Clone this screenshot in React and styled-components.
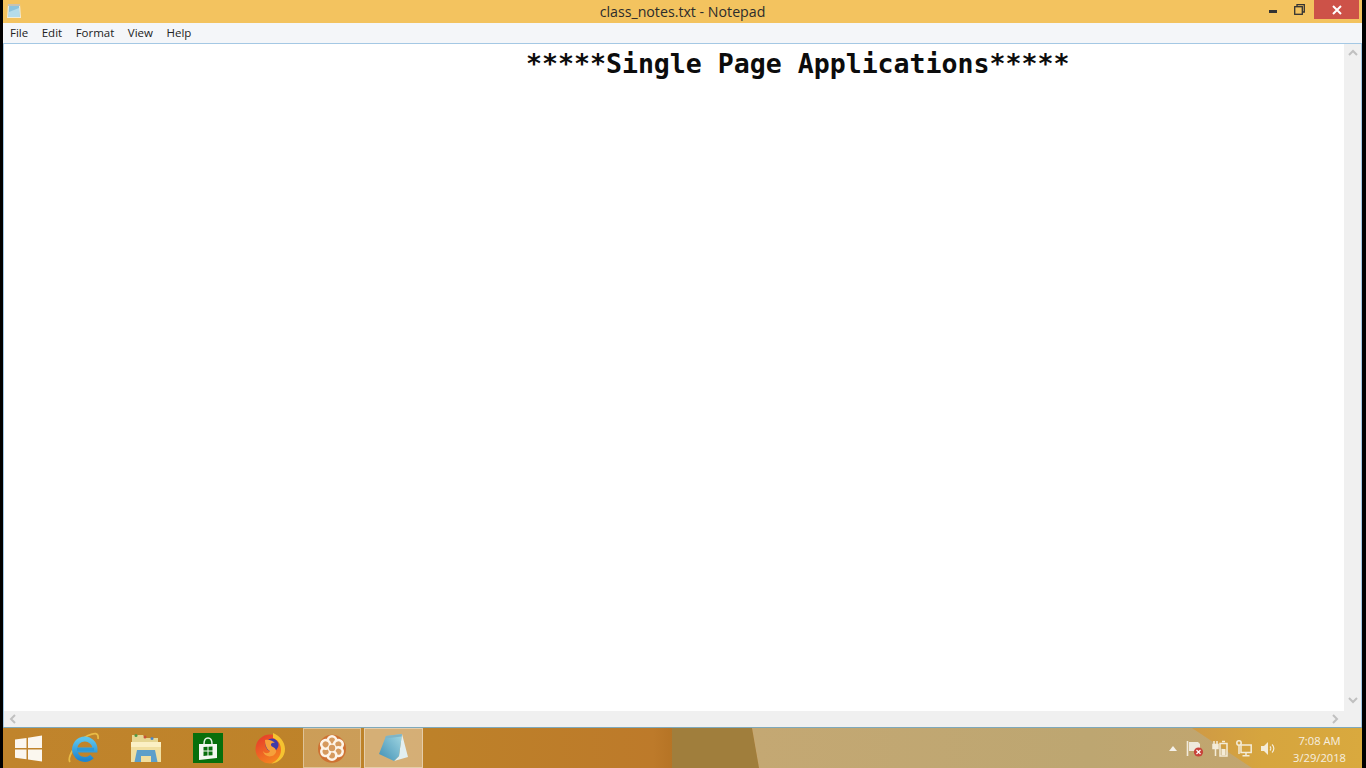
import styled, { createGlobalStyle } from "styled-components";

const GlobalStyle = createGlobalStyle`
  html, body {
    margin: 0;
    padding: 0;
    height: 768px;
    overflow: hidden;
    background: #000;
  }
`;

const menuItems = ["File", "Edit", "Format", "View", "Help"];

function SmallNotepadIcon() {
  return (
    <svg width="16" height="16" viewBox="0 0 16 16">
      <path d="M2 1 H14 L15 15 H1 Z" fill="#f1ecd9" />
      <path d="M3 3 H13 L13.6 14 H2.4 Z" fill="#8cc3dc" />
      <path d="M3 9 L13 5 L13.6 14 H2.4 Z" fill="#b5dcea" />
      <path d="M3 1 V3 M5 1 V3 M7 1 V3 M9 1 V3 M11 1 V3 M13 1 V3" stroke="#7d7566" strokeWidth="0.7" />
    </svg>
  );
}

function NotepadIcon() {
  return (
    <svg width="32" height="30" viewBox="0 0 32 30">
      <defs>
        <linearGradient id="noteBlue" x1="0" y1="1" x2="1" y2="0">
          <stop offset="0" stopColor="#3f8fb4" />
          <stop offset="1" stopColor="#a3d8e3" />
        </linearGradient>
      </defs>
      <path d="M24 1 L30 24 L16 28 L21 23 Z" fill="#e2eff1" />
      <path d="M1 21 L8 3 L24 1 L21 23 L16 28 Z" fill="url(#noteBlue)" />
      <path d="M8 3 L24 1 L23.6 3.6 L7 5.6 Z" fill="#7fb4c6" />
    </svg>
  );
}

function WindowsLogo() {
  return (
    <svg width="27" height="27" viewBox="0 0 27 27" fill="#fbf7ef">
      <path d="M0 4.5 L11.5 3 V13 H0 Z" />
      <path d="M13 2.7 L27 .5 V13 H13 Z" />
      <path d="M0 14.5 H11.5 V24.3 L0 22.7 Z" />
      <path d="M13 14.5 H27 V26.6 L13 24.6 Z" />
    </svg>
  );
}

function IeIcon() {
  return (
    <svg width="32" height="32" viewBox="0 0 32 32" fill="none">
      <defs>
        <linearGradient id="ieBlue" x1="0" y1="0" x2="0" y2="1">
          <stop offset="0" stopColor="#5cc4ec" />
          <stop offset="1" stopColor="#1f86cf" />
        </linearGradient>
      </defs>
      <path d="M2 30 C-1 26 8 9 20 3.5 C26 1 31 0 30 7" stroke="#e8bb45" strokeWidth="1.8" />
      <path
        d="M8.5 18 H27 A10.2 10.2 0 1 0 24 24.5"
        stroke="url(#ieBlue)"
        strokeWidth="5"
      />
      <path d="M9 17.5 H26" stroke="#2c9ada" strokeWidth="3.4" />
    </svg>
  );
}

function FolderIcon() {
  return (
    <svg width="32" height="30" viewBox="0 0 32 30">
      <path d="M2 2 H13 L15 5 H28 V12 H2 Z" fill="#e6d693" />
      <circle cx="6" cy="2.6" r="1.5" fill="#4e9a46" />
      <circle cx="15" cy="4" r="1.5" fill="#c8503a" />
      <circle cx="22" cy="5.5" r="1.5" fill="#4a86c6" />
      <path d="M1 9 H31 V29 H1 Z" fill="#f1dfa0" />
      <path d="M1 9 H31 V14 H1 Z" fill="#fbf0c4" />
      <path d="M7 17 H25 L27.5 29 H21 V23 H11 V29 H4.5 Z" fill="#5d9fca" />
    </svg>
  );
}

function StoreIcon() {
  return (
    <svg width="30" height="30" viewBox="0 0 30 30">
      <rect width="30" height="30" fill="#086f0c" />
      <path d="M11 11 C11 3 19 3 19 11" stroke="#e8f3e8" strokeWidth="1.5" fill="none" />
      <path d="M6 11 L24 11 V25 L6 27 Z" fill="#f4f8f1" />
      <path d="M10.5 14 L14.5 13.8 V17.6 H10.5 Z M15.5 13.8 L19.5 13.6 V17.6 H15.5 Z M10.5 18.6 H14.5 V22.6 L10.5 23 Z M15.5 18.6 H19.5 V22.2 L15.5 22.5 Z" fill="#086f0c" />
    </svg>
  );
}

function FirefoxIcon() {
  return (
    <svg width="32" height="32" viewBox="0 0 32 32">
      <defs>
        <linearGradient id="foxBody" x1="0" y1="0" x2="0.6" y2="1">
          <stop offset="0" stopColor="#e5352b" />
          <stop offset="1" stopColor="#f5861f" />
        </linearGradient>
      </defs>
      <circle cx="16" cy="17" r="14.5" fill="url(#foxBody)" />
      <path d="M19 1 C26 4 31 10 31 17 C31 25 25 31 17 31.5 C23 29 27 24 27 18 C27 12 24 8 19 6 Z" fill="#f5c330" />
      <circle cx="18" cy="13" r="6.5" fill="#3f3aa8" />
      <path d="M11 8 C15 7 19 9 21 11 C17 10 16 13 18 14.5 C22 16 24 20 20 23 C16 26 10 24 9 19 C11 22 15 22 16 19 C13 18 11 13 11 8 Z" fill="#f6a03a" />
    </svg>
  );
}

function FlowerIcon() {
  const petals = [0, 60, 120, 180, 240, 300];
  return (
    <svg width="30" height="30" viewBox="0 0 30 30">
      <circle cx="15" cy="15.8" r="14" fill="#cf6a2c" opacity="0.85" />
      {petals.map((a) => (
        <circle
          key={a}
          cx="15"
          cy="7.6"
          r="4.3"
          fill="#d69a5e"
          stroke="#fdf4e8"
          strokeWidth="2.6"
          transform={`rotate(${a} 15 15)`}
        />
      ))}
      <circle cx="15" cy="15" r="3.2" fill="#d69a5e" />
    </svg>
  );
}

function FlagIcon() {
  return (
    <svg width="18" height="17" viewBox="0 0 18 17">
      <path d="M1.5 1 V16" stroke="#f1eadb" strokeWidth="1.6" />
      <path d="M3 2 H12 L14 4 V11 H3 Z" fill="#efe9dc" />
      <circle cx="12.5" cy="12" r="4.6" fill="#c8423a" />
      <path d="M10.5 10 L14.5 14 M14.5 10 L10.5 14" stroke="#fff" strokeWidth="1.2" />
    </svg>
  );
}

function PowerIcon() {
  return (
    <svg width="16" height="17" viewBox="0 0 16 17" fill="none" stroke="#f4ecd8" strokeWidth="1.5">
      <rect x="8" y="3.5" width="7" height="12.5" />
      <rect x="9.5" y="9" width="4" height="6" fill="#f4ecd8" stroke="none" />
      <path d="M10 1.5 H13" />
      <path d="M2 1 V4 M5 1 V4" />
      <rect x="1" y="4.5" width="5" height="4" fill="#f4ecd8" />
      <path d="M3.5 8 V16" />
    </svg>
  );
}

function NetworkIcon() {
  return (
    <svg width="16" height="17" viewBox="0 0 16 17" fill="none" stroke="#f4ecd8" strokeWidth="1.5">
      <rect x="5" y="5" width="10.2" height="7.5" />
      <path d="M10 12.5 V15.5 M6.5 15.8 H13.5" />
      <circle cx="3" cy="3" r="2.2" />
      <path d="M3 5.5 V14" />
    </svg>
  );
}

function SpeakerIcon() {
  return (
    <svg width="16" height="17" viewBox="0 0 16 17" fill="none" stroke="#f4ecd8" strokeWidth="1.2">
      <path d="M1 6 H4 L8 2 V15 L4 11 H1 Z" fill="#f4ecd8" stroke="none" />
      <path d="M10 6.5 C11 7.5 11 9.5 10 10.5" />
      <path d="M12 4.5 C14.4 6.5 14.4 10.5 12 12.5" />
    </svg>
  );
}

export default function App() {
  return (
    <>
      <GlobalStyle />
      <Screen>
        <Window>
          <TitleBar>
            <TitleIcon>
              <SmallNotepadIcon />
            </TitleIcon>
            <TitleText>class_notes.txt - Notepad</TitleText>
            <WindowButtons>
              <MinimizeButton />
              <RestoreButton>
                <svg width="11" height="11" viewBox="0 0 11 11" fill="none" stroke="#333" strokeWidth="1.3">
                  <rect x="0.7" y="2.7" width="7.6" height="7.6" />
                  <path d="M3 2.5 V0.7 H10.3 V8 H8.5" />
                </svg>
              </RestoreButton>
              <CloseButton>
                <svg width="10" height="10" viewBox="0 0 10 10">
                  <path d="M1 1 L9 9 M9 1 L1 9" stroke="#fff" strokeWidth="2" />
                </svg>
              </CloseButton>
            </WindowButtons>
          </TitleBar>
          <MenuBar>
            {menuItems.map((item) => (
              <MenuItem key={item}>{item}</MenuItem>
            ))}
          </MenuBar>
          <EditArea>
            <TextPane>
              <NoteText>*****Single Page Applications*****</NoteText>
              <HScroll>
                <ScrollArrow>
                  <svg width="8" height="10" viewBox="0 0 8 10" fill="none">
                    <path d="M6 1 L2 5 L6 9" stroke="#c0c0c0" strokeWidth="2" />
                  </svg>
                </ScrollArrow>
                <ScrollArrow>
                  <svg width="8" height="10" viewBox="0 0 8 10" fill="none">
                    <path d="M2 1 L6 5 L2 9" stroke="#c0c0c0" strokeWidth="2" />
                  </svg>
                </ScrollArrow>
              </HScroll>
            </TextPane>
            <VScroll>
              <ScrollArrow>
                <svg width="10" height="8" viewBox="0 0 10 8" fill="none">
                  <path d="M1 6 L5 2 L9 6" stroke="#c0c0c0" strokeWidth="2" />
                </svg>
              </ScrollArrow>
              <ScrollArrow>
                <svg width="10" height="8" viewBox="0 0 10 8" fill="none">
                  <path d="M1 2 L5 6 L9 2" stroke="#c0c0c0" strokeWidth="2" />
                </svg>
              </ScrollArrow>
            </VScroll>
          </EditArea>
        </Window>
        <Taskbar>
          <StartSlot>
            <WindowsLogo />
          </StartSlot>
          <TaskSlot>
            <IeIcon />
          </TaskSlot>
          <TaskSlot>
            <FolderIcon />
          </TaskSlot>
          <TaskSlot>
            <StoreIcon />
          </TaskSlot>
          <TaskSlot>
            <FirefoxIcon />
          </TaskSlot>
          <ActiveGroup>
            <ActiveSlot $width={58} $light={0.22}>
              <FlowerIcon />
            </ActiveSlot>
            <ActiveSlot $width={59} $light={0.36}>
              <NotepadIcon />
            </ActiveSlot>
          </ActiveGroup>
          <Tray>
            <TrayCaret />
            <FlagIcon />
            <PowerIcon />
            <NetworkIcon />
            <SpeakerIcon />
            <Clock>
              <span>7:08 AM</span>
              <span>3/29/2018</span>
            </Clock>
          </Tray>
        </Taskbar>
      </Screen>
    </>
  );
}

const Screen = styled.div`
  width: 1366px;
  height: 768px;
  box-sizing: border-box;
  padding: 0 4px 0 3px;
  display: flex;
  flex-direction: column;
  background: #000;
  font-family: "Open Sans", "Liberation Sans", sans-serif;
`;

const Window = styled.div`
  height: 727px;
  display: flex;
  flex-direction: column;
  background: #f3c35f;
`;

const TitleBar = styled.div`
  height: 23px;
  position: relative;
  display: flex;
  align-items: center;
  justify-content: center;
  background: #f3c35f;
`;

const TitleIcon = styled.div`
  position: absolute;
  left: 3px;
  top: 3px;
  line-height: 0;
`;

const TitleText = styled.div`
  font-size: 14.2px;
  color: #2c2c2c;
`;

const WindowButtons = styled.div`
  position: absolute;
  right: 3px;
  top: 0;
  height: 19px;
  display: flex;
  align-items: center;
`;

const MinimizeButton = styled.div`
  width: 8px;
  height: 3px;
  margin-top: 4px;
  background: #333;
  margin-right: 17px;
`;

const RestoreButton = styled.div`
  line-height: 0;
  margin-right: 9px;
  margin-top: -1px;
`;

const CloseButton = styled.div`
  width: 45px;
  height: 19px;
  background: #cd5248;
  display: flex;
  align-items: center;
  justify-content: center;
`;

const MenuBar = styled.div`
  height: 18px;
  display: flex;
  align-items: center;
  gap: 13.5px;
  padding: 0 0 2px 7px;
  background: #f4f6f9;
  border-bottom: 1px solid #a4c8e4;
`;

const MenuItem = styled.span`
  font-size: 11.5px;
  color: #222;
`;

const EditArea = styled.div`
  flex: 1;
  display: flex;
  background: #fff;
  min-height: 0;
  border-left: 1px solid #a4c8e4;
  border-right: 1px solid #a4c8e4;
`;

const TextPane = styled.div`
  flex: 1;
  display: flex;
  flex-direction: column;
  min-width: 0;
`;

const NoteText = styled.div`
  flex: 1;
  padding: 3px 0 0 522px;
  font-family: "DejaVu Sans Mono", "Liberation Mono", monospace;
  font-weight: 700;
  font-size: 26.55px;
  line-height: 34px;
  color: #0c0c0c;
  white-space: pre;
`;

const HScroll = styled.div`
  height: 16px;
  display: flex;
  justify-content: space-between;
  align-items: center;
  padding: 0 5px 0 5px;
  background: #f0f0f0;
`;

const VScroll = styled.div`
  width: 17px;
  display: flex;
  flex-direction: column;
  justify-content: space-between;
  align-items: center;
  padding: 5px 0 23px;
  box-sizing: border-box;
  background: #f0f0f0;
`;

const ScrollArrow = styled.div`
  line-height: 0;
`;

const Taskbar = styled.div`
  height: 41px;
  position: relative;
  display: flex;
  align-items: center;
  padding-right: 16px;
  background: linear-gradient(
    90deg,
    #c0842c 0,
    #bd8229 400px,
    #bd7a2a 650px,
    #b67425 669px,
    #b67425 1150px,
    #cf9a45 1190px,
    #d6a53e 1260px,
    #d9a93e 100%
  );
  border-top: 1px solid #7fa9bb;
  box-sizing: border-box;

  &::before {
    content: "";
    position: absolute;
    inset: 0 0 0 669px;
    background: #a07e3c;
    clip-path: polygon(0 0, 80px 0, 87px 100%, 0 100%);
  }

  &::after {
    content: "";
    position: absolute;
    inset: 0 0 0 749px;
    background: linear-gradient(90deg, #c4a873, #bda671 55%, #c5a56d);
    clip-path: polygon(0 0, 440px 0, 500px 100%, 7px 100%);
  }

  & > * {
    position: relative;
    z-index: 1;
  }
`;

const StartSlot = styled.div`
  width: 38px;
  margin-left: 12px;
  display: flex;
  line-height: 0;
`;

const TaskSlot = styled.div`
  width: 62px;
  height: 40px;
  display: flex;
  align-items: center;
  justify-content: center;
`;

const ActiveGroup = styled.div`
  display: flex;
  gap: 3px;
  margin-left: 2px;
`;

const ActiveSlot = styled.div`
  width: ${({ $width }) => $width}px;
  height: 40px;
  box-sizing: border-box;
  display: flex;
  align-items: center;
  justify-content: center;
  background: rgba(255, 255, 255, ${({ $light }) => $light});
  border: 1px solid rgba(255, 255, 255, 0.38);
`;

const Tray = styled.div`
  margin-left: auto;
  display: flex;
  align-items: center;
  gap: 8px;
  height: 40px;
`;

const TrayCaret = styled.div`
  width: 0;
  height: 0;
  border-left: 4px solid transparent;
  border-right: 4px solid transparent;
  border-bottom: 5px solid #f4f1ea;
  margin-right: 1px;
`;

const Clock = styled.div`
  display: flex;
  flex-direction: column;
  align-items: center;
  gap: 2px;
  margin-left: 9px;
  padding-top: 2px;
  font-size: 11.2px;
  line-height: 15px;
  color: #f6efe0;
`;
